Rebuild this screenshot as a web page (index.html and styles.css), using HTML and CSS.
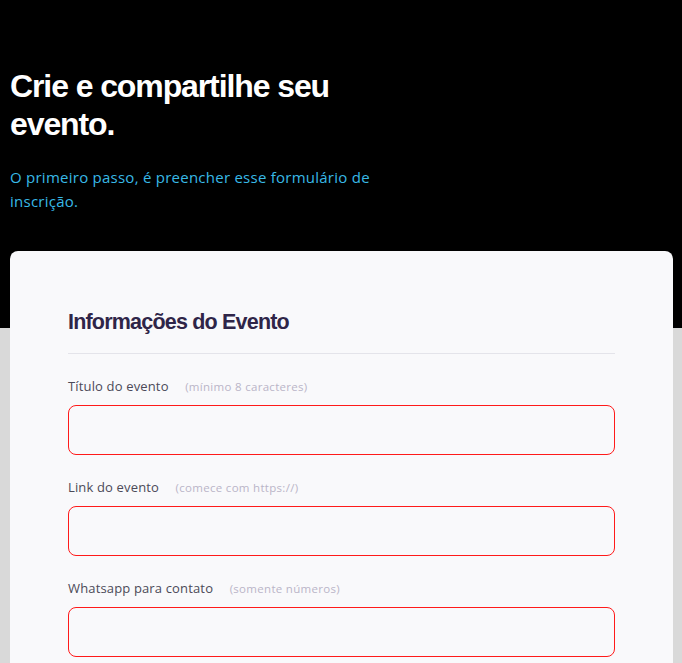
FILE: index.html
```html
<!DOCTYPE html>
<html lang="pt-BR">
<head>
<meta charset="utf-8">
<link rel="stylesheet" href="styles.css">
</head>
<body>
<header class="hero">
  <h1 class="hero-title">Crie e compartilhe seu evento.</h1>
  <p class="hero-sub">O primeiro passo, é preencher esse formulário de inscrição.</p>
</header>
<main class="main">
  <form class="card">
    <h2 class="card-title">Informações do Evento</h2>
    <div class="field">
      <label class="label">Título do evento <span class="hint">(mínimo 8 caracteres)</span></label>
      <input class="input" type="text">
    </div>
    <div class="field">
      <label class="label">Link do evento <span class="hint">(comece com https://)</span></label>
      <input class="input" type="text">
    </div>
    <div class="field">
      <label class="label">Whatsapp para contato <span class="hint">(somente números)</span></label>
      <input class="input" type="text">
    </div>
  </form>
</main>
</body>
</html>
```
FILE: styles.css
```css
* { box-sizing: border-box; }
html, body { margin: 0; padding: 0; }
body {
  background: #d9d9d9;
  font-family: "Open Sans", "Lato", sans-serif;
  overflow: hidden;
}
.hero {
  background: #000;
  height: 328px;
  padding: 67px 10px 0;
}
.hero-title {
  margin: 0;
  width: 360px;
  color: #fff;
  font-family: "Liberation Sans", Arial, sans-serif;
  font-weight: 700;
  font-size: 32px;
  line-height: 38px;
  letter-spacing: -1.1px;
}
.hero-sub {
  margin: 22px 0 0;
  width: 380px;
  color: #38b9e6;
  font-size: 15px;
  line-height: 24px;
  letter-spacing: 0.25px;
}
.main {
  margin-top: -77px;
  padding: 0 9px 0 10px;
}
.card {
  background: #f9f9fb;
  border-radius: 8px;
  padding: 58px 58px 40px;
}
.card-title {
  margin: 0;
  padding-bottom: 18px;
  border-bottom: 1px solid #e4e4ea;
  color: #2f2548;
  font-family: "Liberation Sans", Arial, sans-serif;
  font-weight: 700;
  font-size: 21.5px;
  line-height: 26px;
  letter-spacing: -0.8px;
}
.field { margin-top: 23px; }
.field + .field { margin-top: 23px; }
.label {
  display: block;
  color: #4b4a58;
  font-size: 13px;
  line-height: 18px;
  letter-spacing: 0.15px;
  margin-bottom: 9px;
}
.hint {
  margin-left: 13px;
  color: #b9b5c8;
  font-size: 11.5px;
  letter-spacing: 0.3px;
}
.input {
  display: block;
  width: 100%;
  height: 50px;
  border: 1px solid #ff1a1a;
  border-radius: 8px;
  background: transparent;
  outline: none;
}
```
